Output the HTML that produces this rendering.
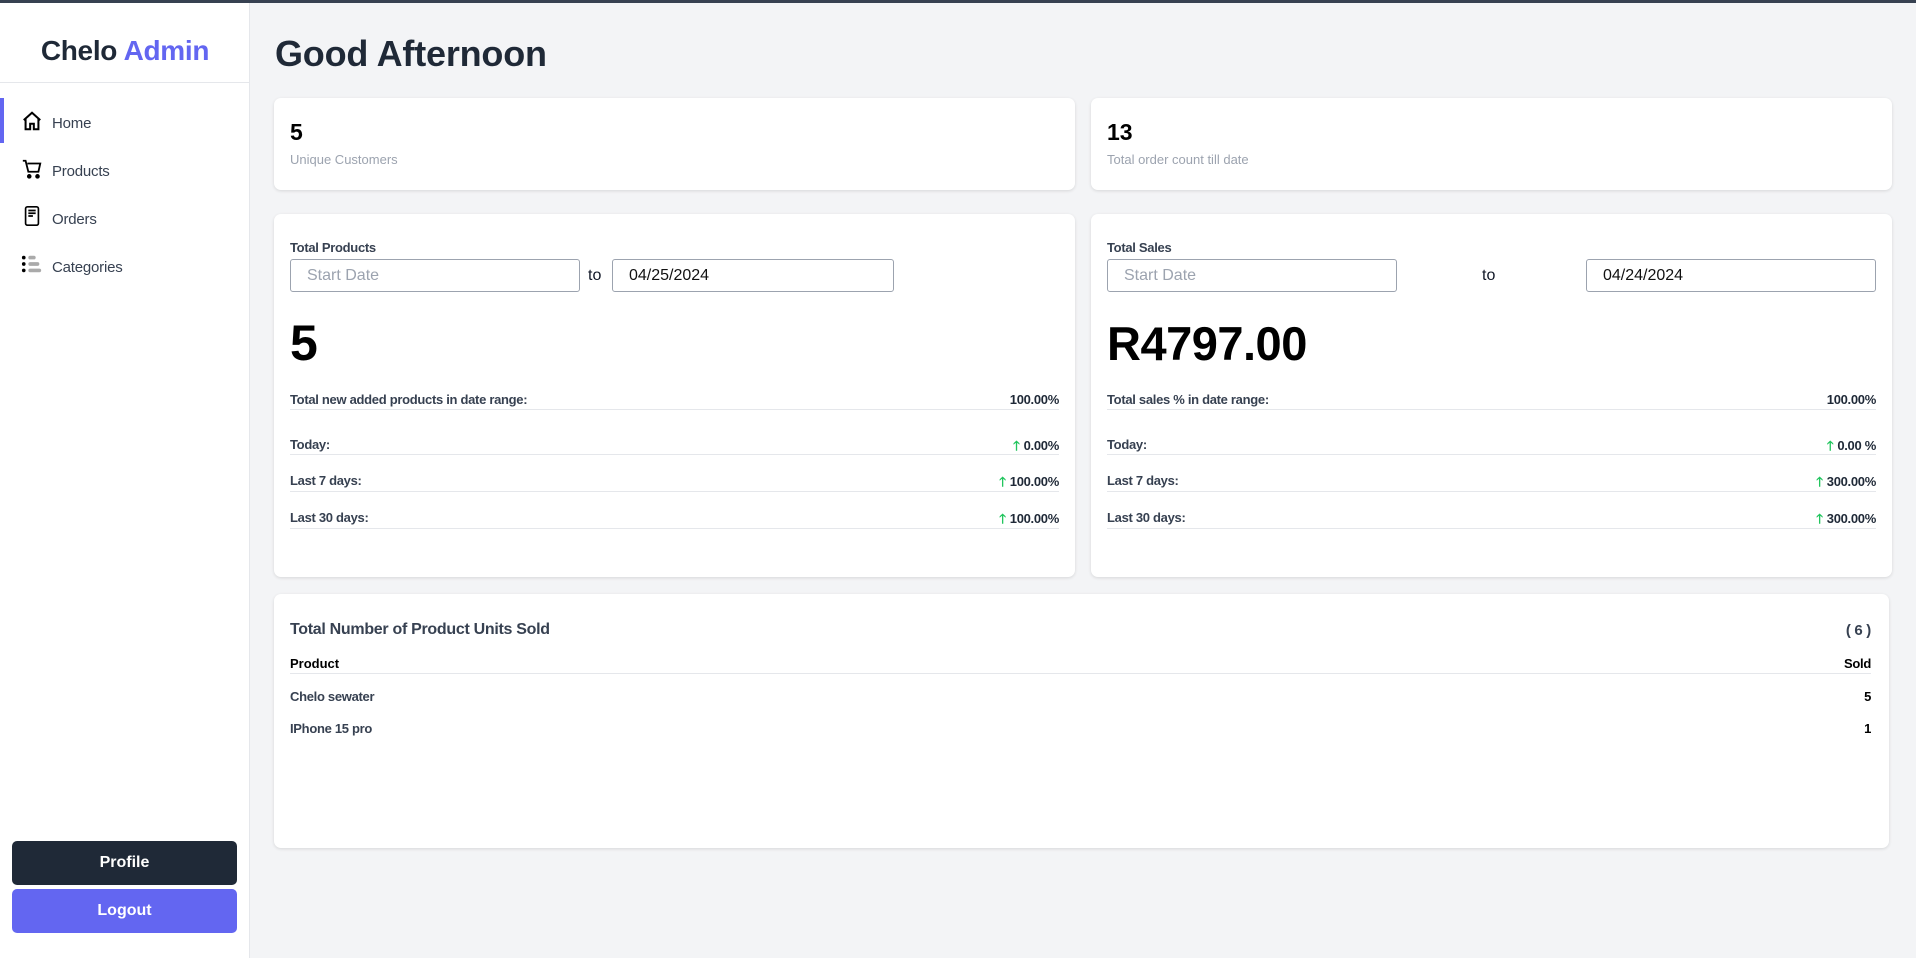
<!DOCTYPE html>
<html><head><meta charset="utf-8"><style>
*{box-sizing:border-box;margin:0;padding:0}
body{width:1916px;height:958px;background:#f3f4f6;font-family:"Liberation Sans","DejaVu Sans",sans-serif;position:relative;overflow:hidden;color:#111827}
.topbar{position:absolute;left:0;top:0;width:1916px;height:3px;background:#374151}
.side{position:absolute;left:0;top:3px;width:250px;height:955px;background:#fff;border-right:1px solid #e5e7eb}
.logo{position:absolute;top:32px;width:250px;text-align:center;font-size:28px;font-weight:bold;color:#1f2937;letter-spacing:-0.3px}
.logo span{color:#6366f1}
.div{position:absolute;top:79px;left:0;width:249px;height:1px;background:#e5e7eb}
.nav{position:absolute;left:52px;font-size:15px;color:#374151;letter-spacing:-0.2px}
.ico{position:absolute;left:21px}
.act{position:absolute;left:0;top:95px;width:4px;height:45px;background:#6366f1}
.btn{position:absolute;left:12px;width:225px;height:44px;border-radius:5px;color:#fff;font-weight:bold;font-size:16px;text-align:center;line-height:44px}
h1{position:absolute;left:275px;top:33px;font-size:36px;font-weight:bold;color:#1f2937;letter-spacing:-0.2px}
.card{position:absolute;background:#fff;border-radius:7px;box-shadow:0 1px 3px rgba(0,0,0,.12)}
.a{position:absolute;white-space:nowrap}
.num{font-size:23px;font-weight:bold;color:#000}
.lbl{font-size:13px;color:#9ca3af}
.bl{font-size:13px;font-weight:bold;color:#374151;letter-spacing:-0.3px}
.inp{position:absolute;height:33px;border:1px solid #9ca3af;border-radius:3px;font-size:16px;padding-left:16px;line-height:31px}
.row{position:absolute;left:16px;right:16px;height:1px;background:#e5e7eb}
.r{position:absolute;right:16px;font-size:13px;font-weight:bold;color:#1f2937;white-space:nowrap;letter-spacing:-0.3px}
.up{color:#22c55e;font-size:13px;margin-right:4px;font-weight:bold}
</style></head><body>
<div class="topbar"></div>
<div class="side">
<div class="logo">Chelo <span>Admin</span></div>
<div class="div"></div>
<div class="act"></div>
<svg class="ico" style="top:107px" width="22" height="22" viewBox="0 0 24 24" fill="none" stroke="#000" stroke-width="2.2"><path d="M3 11L12 3l9 8M5 9v12h5v-6h4v6h5V9"/></svg>
<div class="nav" style="top:112px">Home</div>
<svg class="ico" style="top:155px" width="22" height="22" viewBox="0 0 24 24" fill="none" stroke="#000" stroke-width="2"><path d="M2 3h3l3 12h11l2-9H7"/><circle cx="9" cy="20" r="1.5" fill="#000"/><circle cx="18" cy="20" r="1.5" fill="#000"/></svg>
<div class="nav" style="top:160px">Products</div>
<svg class="ico" style="top:202px" width="22" height="22" viewBox="0 0 24 24" fill="none" stroke="#000" stroke-width="1.8"><rect x="5" y="2" width="14" height="20" rx="2"/><path d="M8 6h8M8 9h8M8 12h5"/></svg>
<div class="nav" style="top:208px">Orders</div>
<svg class="ico" style="top:250px" width="22" height="22" viewBox="0 0 24 24"><circle cx="3" cy="5" r="2" fill="#000"/><circle cx="3" cy="12" r="2" fill="#000"/><circle cx="3" cy="19" r="2" fill="#000"/><rect x="8" y="3" width="8" height="4" rx="2" fill="#aaa"/><rect x="8" y="10" width="12" height="4" rx="2" fill="#aaa"/><rect x="8" y="17" width="14" height="4" rx="2" fill="#aaa"/></svg>
<div class="nav" style="top:256px">Categories</div>
<div class="btn" style="top:838px;background:#1f2937">Profile</div>
<div class="btn" style="top:886px;background:#6366f1">Logout</div>
</div>
<h1>Good Afternoon</h1>

<div class="card" style="left:274px;top:98px;width:801px;height:92px">
<div class="a num" style="left:16px;top:21px">5</div>
<div class="a lbl" style="left:16px;top:54px">Unique Customers</div></div>
<div class="card" style="left:1091px;top:98px;width:801px;height:92px">
<div class="a num" style="left:16px;top:21px">13</div>
<div class="a lbl" style="left:16px;top:54px">Total order count till date</div></div>

<div class="card" style="left:274px;top:214px;width:801px;height:363px">
<div class="a bl" style="left:16px;top:26px">Total Products</div>
<div class="inp" style="left:16px;top:45px;width:290px;color:#9ca3af">Start Date</div>
<div class="a" style="left:314px;top:53px;font-size:16px">to</div>
<div class="inp" style="left:338px;top:45px;width:282px;color:#111">04/25/2024</div>
<div class="a" style="left:16px;top:100px;font-size:50px;font-weight:bold;color:#000">5</div>
<div class="a bl" style="left:16px;top:178px">Total new added products in date range:</div><div class="r" style="top:178px">100.00%</div><div class="row" style="top:195px"></div>
<div class="a bl" style="left:16px;top:223px">Today:</div><div class="r" style="top:223px"><span class="up">🡑</span>0.00%</div><div class="row" style="top:240px"></div>
<div class="a bl" style="left:16px;top:259px">Last 7 days:</div><div class="r" style="top:259px"><span class="up">🡑</span>100.00%</div><div class="row" style="top:277px"></div>
<div class="a bl" style="left:16px;top:296px">Last 30 days:</div><div class="r" style="top:296px"><span class="up">🡑</span>100.00%</div><div class="row" style="top:314px"></div>
</div>

<div class="card" style="left:1091px;top:214px;width:801px;height:363px">
<div class="a bl" style="left:16px;top:26px">Total Sales</div>
<div class="inp" style="left:16px;top:45px;width:290px;color:#9ca3af">Start Date</div>
<div class="a" style="left:391px;top:53px;font-size:16px">to</div>
<div class="inp" style="left:495px;top:45px;width:290px;color:#111">04/24/2024</div>
<div class="a" style="left:16px;top:102px;font-size:47px;font-weight:bold;color:#000;letter-spacing:-0.5px">R4797.00</div>
<div class="a bl" style="left:16px;top:178px">Total sales % in date range:</div><div class="r" style="top:178px">100.00%</div><div class="row" style="top:195px"></div>
<div class="a bl" style="left:16px;top:223px">Today:</div><div class="r" style="top:223px"><span class="up">🡑</span>0.00 %</div><div class="row" style="top:240px"></div>
<div class="a bl" style="left:16px;top:259px">Last 7 days:</div><div class="r" style="top:259px"><span class="up">🡑</span>300.00%</div><div class="row" style="top:277px"></div>
<div class="a bl" style="left:16px;top:296px">Last 30 days:</div><div class="r" style="top:296px"><span class="up">🡑</span>300.00%</div><div class="row" style="top:314px"></div>
</div>

<div class="card" style="left:274px;top:594px;width:1615px;height:254px">
<div class="a" style="left:16px;top:27px;font-size:16px;font-weight:bold;color:#374151;letter-spacing:-0.3px">Total Number of Product Units Sold</div>
<div class="r" style="top:28px;right:18px;font-size:15px;color:#374151">( 6 )</div>
<div class="a" style="left:16px;top:62px;font-size:13px;font-weight:bold;color:#000">Product</div>
<div class="r" style="top:62px;right:18px;color:#000">Sold</div>
<div class="row" style="top:79px;right:18px"></div>
<div class="a bl" style="left:16px;top:95px">Chelo sewater</div><div class="r" style="top:95px;right:18px;color:#000">5</div>
<div class="a bl" style="left:16px;top:127px">IPhone 15 pro</div><div class="r" style="top:127px;right:18px;color:#000">1</div>
</div>
</body></html>
